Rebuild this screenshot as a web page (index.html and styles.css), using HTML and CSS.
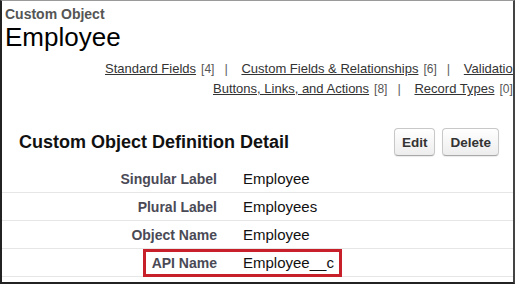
FILE: index.html
```html
<!DOCTYPE html>
<html>
<head>
	<meta charset="utf-8">
	<link rel="stylesheet" href="styles.css">
	<title>Employee</title>
</head>
<body>
	<div class="frame">
		<div class="page-head">
			<div class="page-type">Custom Object</div>
			<h1 class="page-title">Employee</h1>
		</div>

		<div class="links">
			<div class="link-row first">
				<a href="#">Standard Fields</a><span class="count">[4]</span><span class="sep">|</span>
				<a href="#">Custom Fields &amp; Relationships</a><span class="count">[6]</span><span class="sep">|</span>
				<a href="#">Validation Rules</a><span class="count">[0]</span>
			</div>
			<div class="link-row second">
				<a href="#">Buttons, Links, and Actions</a><span class="count">[8]</span><span class="sep">|</span>
				<a href="#">Record Types</a><span class="count">[0]</span>
			</div>
		</div>

		<div class="section-head">
			<h2>Custom Object Definition Detail</h2>
			<div class="buttons">
				<button class="btn">Edit</button>
				<button class="btn">Delete</button>
			</div>
		</div>

		<div class="detail">
			<div class="row">
				<div class="label">Singular Label</div>
				<div class="value">Employee</div>
			</div>
			<div class="row">
				<div class="label">Plural Label</div>
				<div class="value">Employees</div>
			</div>
			<div class="row">
				<div class="label">Object Name</div>
				<div class="value">Employee</div>
			</div>
			<div class="row marked">
				<div class="label">API Name</div>
				<div class="value">Employee__c</div>
				<div class="highlight"></div>
			</div>
		</div>
	</div>
</body>
</html>
```

FILE: styles.css
```css
	body {
		margin: 0;
		background: #fff;
		font-family: "Liberation Sans", Arial, sans-serif;
	}

	.frame {
		width: 515px;
		height: 284px;
		box-sizing: border-box;
		border-top: 1px solid #9a9a9a;
		border-left: 2px solid #222;
		border-right: 2px solid #444;
		border-bottom: 2px solid #222;
		overflow: hidden;
		background: #fff;
	}

	.page-head {
		padding: 5px 0 0 3px;
	}

	.page-type {
		font-size: 14px;
		font-weight: bold;
		line-height: 16px;
		color: #555;
	}

	.page-title {
		margin: 0;
		font-size: 26px;
		font-weight: normal;
		line-height: 30px;
		color: #000;
	}

	.links {
		margin-top: 7px;
		font-size: 13px;
		line-height: 20px;
		white-space: nowrap;
	}

	.link-row.first {
		padding-left: 103px;
	}

	.link-row.second {
		padding-left: 211px;
	}

	.links a {
		color: #333;
		text-decoration: underline;
	}

	.count {
		font-size: 12px;
		color: #555;
		margin-left: 5px;
	}

	.sep {
		color: #666;
		padding: 0 10px;
	}

	.section-head {
		display: flex;
		align-items: center;
		justify-content: space-between;
		margin-top: 29px;
		padding: 0 14px 0 17px;
		height: 28px;
	}

	.section-head h2 {
		margin: 0;
		font-size: 18px;
		font-weight: bold;
		color: #111;
	}

	.buttons {
		display: flex;
		gap: 7px;
	}

	.btn {
		height: 28px;
		padding: 0 7px;
		font-family: "Liberation Sans", Arial, sans-serif;
		font-size: 13.5px;
		font-weight: bold;
		color: #333;
		background: linear-gradient(#ffffff, #ededed);
		border: 1px solid #c8c8c8;
		border-bottom-color: #a8a8a8;
		border-radius: 4px;
		box-shadow: 0 1px 1px rgba(0,0,0,0.08);
	}

	.detail {
		margin-top: 9px;
	}

	.row {
		display: grid;
		grid-template-columns: 215px 1fr;
		align-items: center;
		height: 27px;
		border-bottom: 1px solid #e6e6e6;
	}

	.label {
		text-align: right;
		font-size: 14px;
		font-weight: bold;
		color: #4a4a56;
	}

	.value {
		padding-left: 26px;
		font-size: 15px;
		color: #111;
	}

	.marked {
		position: relative;
	}

	.highlight {
		position: absolute;
		left: 141px;
		top: 0;
		width: 199px;
		height: 28px;
		box-sizing: border-box;
		border: 3px solid #c8202a;
	}
```
